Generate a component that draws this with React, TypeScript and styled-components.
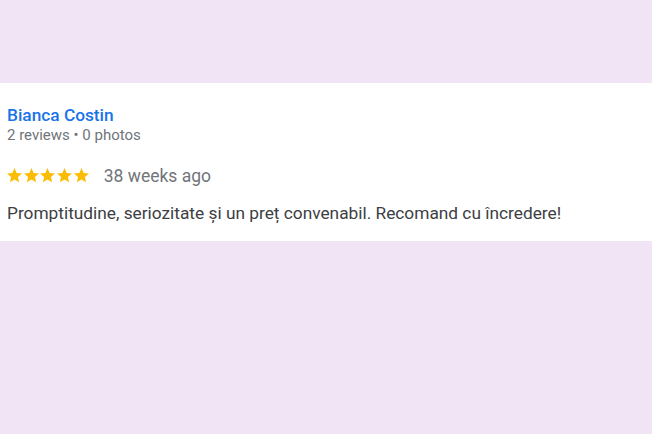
import * as React from 'react';
import styled, { createGlobalStyle } from 'styled-components';

const GlobalStyle = createGlobalStyle`
  html, body {
    margin: 0;
    padding: 0;
    background: #f1e4f5;
    font-family: Roboto, "Liberation Sans", Arial, sans-serif;
  }
`;

const Page = styled.div`
  width: 652px;
  height: 434px;
  padding-top: 83px;
  box-sizing: border-box;
`;

const Card = styled.div`
  background: #ffffff;
  padding: 22px 7px 16px;
  display: flex;
  flex-direction: column;
`;

const Name = styled.div`
  font-size: 17.3px;
  line-height: 20px;
  font-weight: 500;
  color: #1a73e8;
`;

const Meta = styled.div`
  font-size: 15px;
  line-height: 18px;
  color: #70757a;
  margin-top: 1px;
`;

const RatingRow = styled.div`
  display: flex;
  align-items: center;
  margin-top: 21px;
  height: 22px;
`;

const Stars = styled.div`
  display: flex;
  gap: 1.7px;
  margin-right: 15px;
  margin-bottom: 1px;
`;

const When = styled.span`
  font-size: 17.5px;
  color: #70757a;
`;

const Body = styled.p`
  margin: 14px 0 0;
  font-size: 17.3px;
  line-height: 24px;
  color: #3c4043;
`;

const Star = () => (
  <svg width="15" height="14.3" viewBox="2 2 20 19">
    <path
      fill="#fbbc04"
      d="M12 17.27L18.18 21l-1.64-7.03L22 9.24l-7.19-.61L12 2 9.19 8.63 2 9.24l5.46 4.73L5.82 21z"
    />
  </svg>
);

export default function App() {
  return (
    <Page>
      <GlobalStyle />
      <Card>
        <Name>Bianca Costin</Name>
        <Meta>2 reviews • 0 photos</Meta>
        <RatingRow>
          <Stars>
            {[0, 1, 2, 3, 4].map((i) => (
              <Star key={i} />
            ))}
          </Stars>
          <When>38 weeks ago</When>
        </RatingRow>
        <Body>Promptitudine, seriozitate și un preț convenabil. Recomand cu încredere!</Body>
      </Card>
    </Page>
  );
}
